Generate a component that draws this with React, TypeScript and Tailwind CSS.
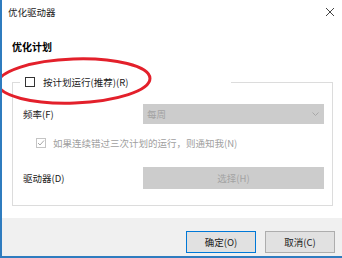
import React from "react";

const font = { fontFamily: '"Noto Sans CJK SC", "Noto Sans", sans-serif' };

export default function App() {
  return (
    <div
      className="relative w-[342px] h-[258px] bg-white border-l-2 border-b-2 border-[#2f7cbf] overflow-hidden text-[9.5px] leading-[12px] text-[#1a1a1a]"
      style={font}
    >
      {/* title bar */}
      <div className="h-[24px] flex items-center justify-between pl-[6px] pr-[6px]">
        <span>优化驱动器</span>
        <svg width="10" height="10" viewBox="0 0 10 10" className="mr-[1px]">
          <path d="M1 1 L9 9 M9 1 L1 9" stroke="#444" strokeWidth="1" fill="none" />
        </svg>
      </div>

      <div className="mt-[17px] ml-[10px] h-[12px] font-bold text-[10px] text-black">优化计划</div>

      {/* group box */}
      <div className="mt-[29px] ml-[10px] w-[321px] h-[124px] border border-[#dcdcdc] flex flex-col">
        <div className="mt-[-8px] ml-[7px] h-[14px] w-[211px] bg-white flex items-center pl-[5px]">
          <span className="w-[10px] h-[10px] border border-[#333] bg-white" />
          <span className="ml-[8px]">按计划运行(推荐)(R)</span>
        </div>

        <div className="mt-[15px] flex items-center pl-[10px]">
          <span className="w-[120px]">频率(F)</span>
          <div className="w-[181px] h-[20px] bg-[#cccccc] flex items-center justify-between pl-[4px] pr-[5px] text-[#a3a3a3]">
            <span>每周</span>
            <svg width="7" height="5" viewBox="0 0 7 5">
              <path d="M0.5 0.5 L3.5 3.5 L6.5 0.5" stroke="#a8a8a8" strokeWidth="1" fill="none" />
            </svg>
          </div>
        </div>

        <div className="mt-[13px] flex items-center pl-[23px] text-[#a0a0a0]">
          <span className="w-[10px] h-[10px] border border-[#c4c4c4] flex items-center justify-center">
            <svg width="8" height="8" viewBox="0 0 8 8">
              <path d="M1 4 L3 6 L7 1.5" stroke="#a8a8a8" strokeWidth="1" fill="none" />
            </svg>
          </span>
          <span className="ml-[7px]">如果连续错过三次计划的运行，则通知我(N)</span>
        </div>

        <div className="mt-[18px] flex items-center pl-[10px]">
          <span className="w-[120px]">驱动器(D)</span>
          <div className="w-[181px] h-[22px] bg-[#cccccc] flex items-center justify-center text-[#a3a3a3]">
            选择(H)
          </div>
        </div>
      </div>

      {/* footer */}
      <div className="mt-[12px] h-[38px] bg-[#f0f0f0] flex justify-end items-start pt-[13px] pr-[7px] gap-[9px]">
        <button className="w-[70px] h-[22px] bg-[#e1e1e1] border border-[#0078d7] text-[9.5px] leading-[12px] text-[#1a1a1a]" style={font}>
          确定(O)
        </button>
        <button className="w-[70px] h-[22px] bg-[#e1e1e1] border border-[#adadad] text-[9.5px] leading-[12px] text-[#1a1a1a]" style={font}>
          取消(C)
        </button>
      </div>

      {/* red annotation ellipse */}
      <svg className="absolute left-0 top-[55px]" width="160" height="52" viewBox="0 0 160 52">
        <ellipse cx="72" cy="26" rx="76" ry="22" stroke="#e3202b" strokeWidth="3" fill="none" transform="rotate(-2 72 26)" />
      </svg>
    </div>
  );
}
